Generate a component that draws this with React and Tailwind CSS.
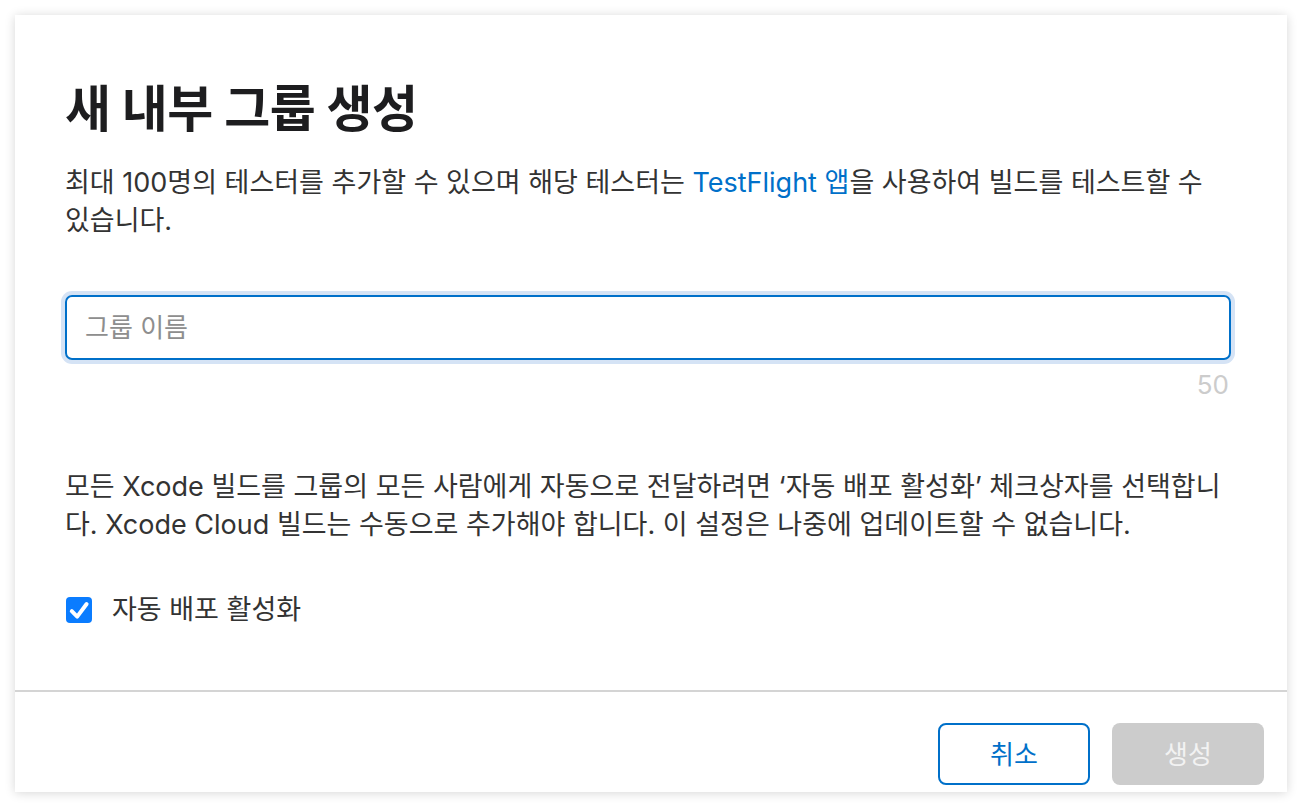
import React from 'react'

const font = { fontFamily: 'Inter, "Noto Sans CJK KR", sans-serif' }

export default function App() {
  return (
    <div className="w-[1302px] h-[806px] bg-white overflow-hidden pt-[15px] pl-[15px]" style={font}>
      <div className="w-[1272px] h-[777px] bg-white shadow-[0_1px_10px_rgba(0,0,0,0.16)] flex flex-col">
        {/* Body */}
        <div className="pl-[50px] pr-[56px] pt-[64px] flex-1">
          <h1 className="text-[50px] leading-[60px] font-bold text-[#1d1d1f] tracking-[-0.5px]">
            새 내부 그룹 생성
          </h1>
          <p className="mt-[25px] text-[27px] leading-[38px] text-[#333] break-keep">
            최대 100명의 테스터를 추가할 수 있으며 해당 테스터는 <span className="text-[#0070c9]">TestFlight 앱</span>을 사용하여 빌드를 테스트할 수 있습니다.
          </p>

          {/* Input */}
          <div className="mt-[55px]">
            <div className="h-[65px] rounded-[7px] border-2 border-[#0070c9] ring-4 ring-[#d5e3f5] flex items-center px-[18px]">
              <span className="text-[26px] text-[#8e8e8e]">그룹 이름</span>
            </div>
            <div className="text-right text-[26px] leading-[30px] text-[#cccccc] mt-[10px] pr-[2px]">50</div>
          </div>

          <p className="mt-[68px] text-[27px] leading-[38px] text-[#333]">
            모든 Xcode 빌드를 그룹의 모든 사람에게 자동으로 전달하려면 ‘자동 배포 활성화’ 체크상자를 선택합니다. Xcode Cloud 빌드는 수동으로 추가해야 합니다. 이 설정은 나중에 업데이트할 수 없습니다.
          </p>

          <label className="mt-[47px] h-[38px] flex items-center gap-[20px]">
            <span className="w-[26px] h-[26px] ml-px rounded-[4px] bg-[#0a7cff] flex items-center justify-center">
              <svg width="26" height="26" viewBox="0 0 26 26" fill="none">
                <path d="M5.8 14.2 L11.2 19.6 L20.6 7" stroke="white" strokeWidth="4" strokeLinecap="round" strokeLinejoin="round" />
              </svg>
            </span>
            <span className="text-[27px] text-[#333]">자동 배포 활성화</span>
          </label>
        </div>

        {/* Footer */}
        <div className="border-t-2 border-[#d4d4d4] h-[102px] flex items-start justify-end gap-[22px] pr-[23px] pt-[31px]">
          <button className="w-[152px] h-[62px] rounded-[8px] border-2 border-[#0070c9] text-[#0070c9] text-[26px] bg-white">
            취소
          </button>
          <button className="w-[152px] h-[62px] rounded-[8px] bg-[#cccccc] text-[#f2f2f2] text-[26px]">
            생성
          </button>
        </div>
      </div>
    </div>
  )
}
